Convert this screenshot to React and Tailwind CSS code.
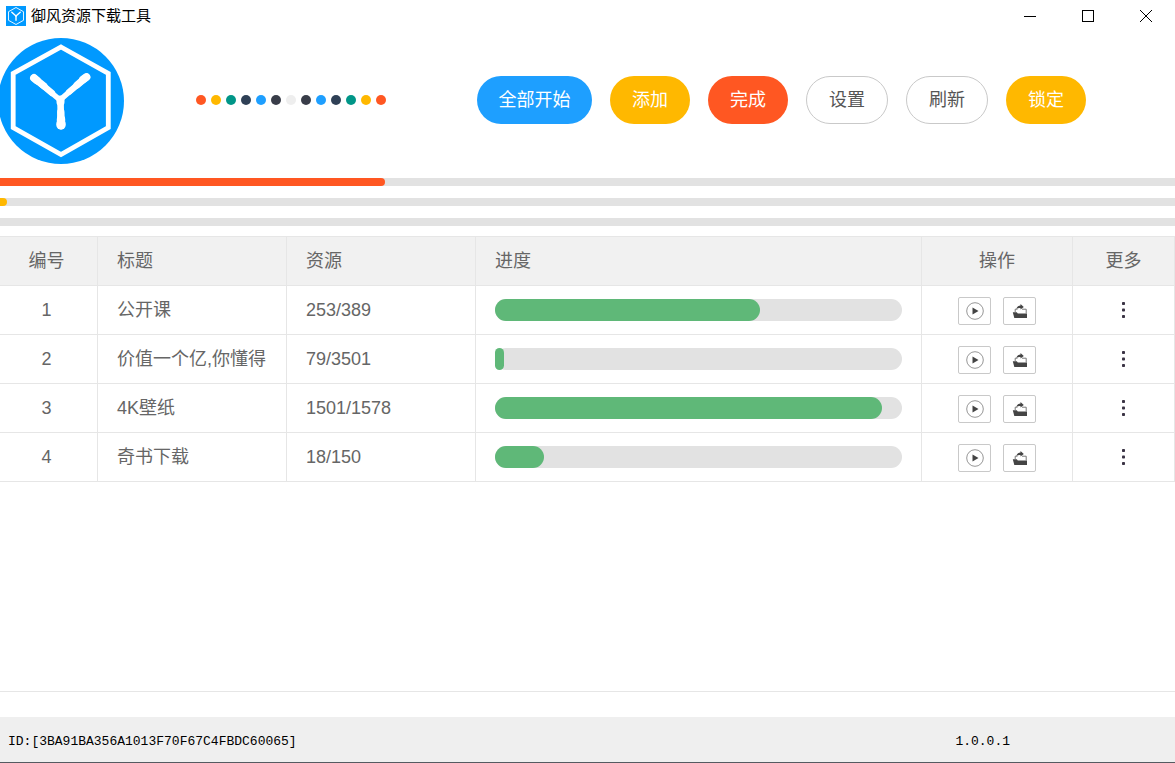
import React from 'react';

const dots = [
  'bg-[#ff5722]',
  'bg-[#ffb800]',
  'bg-[#009688]',
  'bg-[#2f4056]',
  'bg-[#1e9fff]',
  'bg-[#393d49]',
  'bg-[#eeeeee]',
  'bg-[#393d49]',
  'bg-[#1e9fff]',
  'bg-[#2f4056]',
  'bg-[#009688]',
  'bg-[#ffb800]',
  'bg-[#ff5722]',
];

const actions = [
  { label: '全部开始', style: 'w-[115px] bg-[#1e9fff] text-white' },
  { label: '添加', style: 'w-20 bg-[#ffb800] text-white' },
  { label: '完成', style: 'w-20 bg-[#ff5722] text-white' },
  { label: '设置', style: 'w-[82px] border border-[#c9c9c9] bg-white text-[#555555]' },
  { label: '刷新', style: 'w-[82px] border border-[#c9c9c9] bg-white text-[#555555]' },
  { label: '锁定', style: 'w-20 bg-[#ffb800] text-white' },
];

const totals = [
  { name: '总进度', percent: 32.8, color: 'bg-[#ff5722]' },
  { name: '当前进度', percent: 0.6, color: 'bg-[#ffb800]' },
  { name: '文件进度', percent: 0, color: 'bg-[#1e9fff]' },
];

const tasks = [
  { id: 1, title: '公开课', done: 253, total: 389 },
  { id: 2, title: '价值一个亿,你懂得', done: 79, total: 3501 },
  { id: 3, title: '4K壁纸', done: 1501, total: 1578 },
  { id: 4, title: '奇书下载', done: 18, total: 150 },
];

const SmallLogo = () => (
  <svg viewBox="0 0 20 20" className="h-5 w-5" fill="none" stroke="#ffffff" aria-hidden="true">
    <rect width="20" height="20" fill="#0099ff" stroke="none" />
    <path d="M10 1.5 17.5 5.7v8.6L10 18.5 2.5 14.3V5.7Z" strokeWidth="0.9" />
    <g strokeWidth="1.4" strokeLinecap="round">
      <line x1="5.8" y1="6.3" x2="10" y2="10" />
      <line x1="14.2" y1="6.3" x2="10" y2="10" />
      <line x1="10" y1="10" x2="10" y2="14.2" />
    </g>
  </svg>
);

// each arm gets thicker towards its end
const Logo = () => (
  <svg viewBox="0 0 124 128" className="h-32 w-[124px] shrink-0" fill="none" stroke="#ffffff" role="img" aria-label="logo">
    <circle cx="61" cy="65" r="63" fill="#0099ff" stroke="none" />
    <path d="M61 11 108.3 37.5V91.5L61 118.5 13.2 91.5V37.5Z" strokeWidth="4.8" />
    <g strokeLinecap="round">
      <line x1="34" y1="42" x2="60" y2="64" strokeWidth="5.5" />
      <line x1="34" y1="42" x2="52" y2="57" strokeWidth="6.2" />
      <line x1="34" y1="42" x2="44" y2="50" strokeWidth="7" />
      <line x1="34" y1="42" x2="37" y2="44.5" strokeWidth="7.8" />
      <line x1="86.5" y1="41" x2="60" y2="64" strokeWidth="5.5" />
      <line x1="86.5" y1="41" x2="69" y2="56" strokeWidth="6.2" />
      <line x1="86.5" y1="41" x2="77" y2="49" strokeWidth="7" />
      <line x1="86.5" y1="41" x2="83" y2="43.5" strokeWidth="7.8" />
      <line x1="60.5" y1="65" x2="61" y2="89" strokeWidth="6.6" />
      <line x1="60.8" y1="76" x2="61" y2="89" strokeWidth="7.4" />
      <line x1="61" y1="83" x2="61" y2="89" strokeWidth="8.4" />
      <line x1="61" y1="88" x2="61" y2="89" strokeWidth="9.4" />
      <line x1="60.5" y1="63.5" x2="60.5" y2="66" strokeWidth="8" />
    </g>
  </svg>
);

const PlayIcon = () => (
  <svg viewBox="0 0 18 18" className="h-[18px] w-[18px]" aria-hidden="true">
    <circle cx="9" cy="9" r="8.3" fill="none" stroke="#8a8a8a" strokeWidth="0.9" />
    <path d="M6.5 5.6 12.5 9 6.5 12.4Z" fill="#444444" />
  </svg>
);

const ShareIcon = () => (
  <svg viewBox="0 0 16 16" className="h-4 w-4" aria-hidden="true">
    <path d="M0.8 9.2h4l1 1.2h9.2V15H2.3Z" fill="#444444" />
    <path d="M3.2 9V6.2h2.3M10 6.2h4.2V10.500" fill="none" stroke="#777777" />
    <path d="M4.2 6C5 3.700 6.800 2.600 8.500 2.600V1L11.800 3.900 8.500 6.500V5C6.800 4.900 5.500 5.300 4.200 6Z" fill="#444444" />
  </svg>
);

const MoreIcon = () => (
  <svg viewBox="0 0 3 16" className="h-4 w-[3px]" fill="#3a3344" aria-hidden="true">
    <rect y="0" width="3" height="3" rx="0.8" />
    <rect y="6.5" width="3" height="3" rx="0.8" />
    <rect y="13" width="3" height="3" rx="0.8" />
  </svg>
);

const TitleBar = () => (
  <div className="flex h-8 items-center bg-white">
    <div className="flex items-center gap-[5px] pl-1.5">
      <SmallLogo />
      <h1 className="text-[15px] leading-5 text-black">御风资源下载工具</h1>
    </div>
    <div className="ml-auto flex h-full">
      <button type="button" aria-label="最小化" className="flex w-[58px] items-center justify-center">
        <svg viewBox="0 0 12 12" className="h-3 w-3" stroke="#000000">
          <path d="M0 6.5h12" />
        </svg>
      </button>
      <button type="button" aria-label="最大化" className="flex w-[58px] items-center justify-center">
        <svg viewBox="0 0 12 12" className="h-3 w-3" fill="none" stroke="#000000">
          <rect x="0.5" y="0.5" width="11" height="11" />
        </svg>
      </button>
      <button type="button" aria-label="关闭" className="flex w-[58px] items-center justify-center">
        <svg viewBox="0 0 12 12" className="h-3 w-3" stroke="#000000">
          <path d="M0 0 12 12M12 0 0 12" />
        </svg>
      </button>
    </div>
  </div>
);

const Header = () => (
  <header className="flex h-[136px] items-center">
    <Logo />
    <div className="ml-[72px] flex gap-[5px]">
      {dots.map((color, i) => (
        <span key={i} className={`h-2.5 w-2.5 rounded-full ${color}`} />
      ))}
    </div>
    <div className="mr-[89px] ml-auto flex gap-[18px]">
      {actions.map((item) => (
        <button key={item.label} type="button" className={`h-12 rounded-full text-lg ${item.style}`}>
          {item.label}
        </button>
      ))}
    </div>
  </header>
);

const TaskTable = () => (
  <table className="w-full table-fixed border-separate border-spacing-0 border-t border-[#e6e6e6] text-lg text-[#666666]">
    <colgroup>
      <col className="w-[98px]" />
      <col className="w-[189px]" />
      <col className="w-[189px]" />
      <col />
      <col className="w-[151px]" />
      <col className="w-[102px]" />
    </colgroup>
    <thead>
      <tr className="h-[49px] bg-[#f1f1f1] [&>th]:border-r [&>th]:border-b [&>th]:border-[#e6e6e6] [&>th]:py-0 [&>th]:font-normal">
        <th className="pr-1 pl-0">编号</th>
        <th className="px-[19px] text-left">标题</th>
        <th className="px-[19px] text-left">资源</th>
        <th className="px-[19px] text-left">进度</th>
        <th className="px-0">操作</th>
        <th className="px-0">更多</th>
      </tr>
    </thead>
    <tbody>
      {tasks.map((task) => (
        <tr key={task.id} className="h-[49px] [&>td]:border-r [&>td]:border-b [&>td]:border-[#e6e6e6] [&>td]:py-0">
          <td className="pr-1 pl-0 text-center">{task.id}</td>
          <td className="px-[19px] whitespace-nowrap">{task.title}</td>
          <td className="px-[19px]">{task.done}/{task.total}</td>
          <td className="px-[19px]">
            <div className="h-[22px] rounded-full bg-[#e2e2e2]">
              <div
                className="h-full rounded-full bg-[#5fb878]"
                style={{ width: `${(task.done / task.total) * 100}%` }}
              />
            </div>
          </td>
          <td className="px-0">
            <div className="flex justify-center gap-3 pt-0.5">
              <button type="button" aria-label="开始" className="flex h-7 w-[33px] items-center justify-center rounded-xs border border-[#c9c9c9] bg-white">
                <PlayIcon />
              </button>
              <button type="button" aria-label="导出" className="flex h-7 w-[33px] items-center justify-center rounded-xs border border-[#c9c9c9] bg-white">
                <ShareIcon />
              </button>
            </div>
          </td>
          <td className="px-0">
            <button type="button" aria-label="更多" className="mx-auto flex h-7 w-7 items-center justify-center">
              <MoreIcon />
            </button>
          </td>
        </tr>
      ))}
    </tbody>
  </table>
);

const App = () => {
  return (
    <div className="flex min-h-screen flex-col bg-white font-['Liberation_Sans','Noto_Sans_CJK_SC',sans-serif]">
      <TitleBar />
      <Header />
      <div className="flex flex-col gap-3 pt-2.5 pb-2.5">
        {totals.map((bar) => (
          <div key={bar.name} role="progressbar" aria-label={bar.name} aria-valuenow={bar.percent} className="h-2 bg-[#e2e2e2]">
            <div className={`h-full rounded-r-full ${bar.color}`} style={{ width: `${bar.percent}%` }} />
          </div>
        ))}
      </div>
      <main className="mb-[25px] flex-1 border-b border-[#e6e6e6]">
        <TaskTable />
      </main>
      <footer className="flex h-[46px] items-center border-b border-[#555a60] bg-[#efefef] pt-1 pl-2 font-['Liberation_Mono',monospace] text-[13px] text-black">
        <span>ID:[3BA91BA356A1013F70F67C4FBDC60065]</span>
        <span className="mr-[165px] ml-auto">1.0.0.1</span>
      </footer>
    </div>
  );
};

export default App;
